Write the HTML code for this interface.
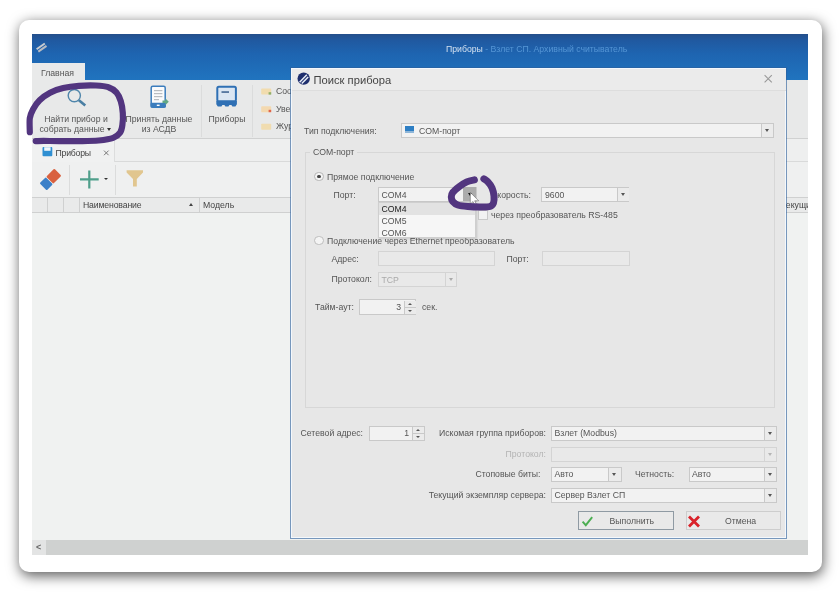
<!DOCTYPE html>
<html lang="ru"><head><meta charset="utf-8"><title>Поиск прибора</title>
<style>
html,body{margin:0;padding:0;background:#fff}
body{width:840px;height:597px;position:relative;overflow:hidden;font-family:"Liberation Sans",sans-serif;font-size:8.7px;color:#555}
#card{position:absolute;left:19px;top:20px;width:803px;height:552px;border-radius:10px;background:#fff;box-shadow:1px 3.5px 13px rgba(0,0,0,.64)}
#shot{position:absolute;left:0;top:0;width:840px;height:597px;clip-path:inset(34px 32px 42px 32px);filter:blur(.7px)}
#shot div,#shot span{position:absolute;box-sizing:border-box;white-space:nowrap}
.t{line-height:12px;height:12px}
.c{text-align:center}
.r{text-align:right}
.inp{background:#f2f2f2;border:1px solid #c9c9c9}
.dis{background:#e9e9e9;border:1px solid #d4d4d4}
.btn{background:#ebebeb;border-left:1px solid #c9c9c9}
.arr{width:0;height:0;border-left:2.5px solid transparent;border-right:2.5px solid transparent;border-top:3px solid #555}
.vsep{width:1px;background:#dbdcdc}
.hl{height:1px;background:#d2d3d3}
#ann{position:absolute;left:0;top:0}
</style></head><body>
<div id="card"></div>
<div id="shot">
<!-- main window -->
<div style="left:32px;top:34px;width:776px;height:521px;background:#f0f2f1"></div>
<div style="left:32px;top:34px;width:776px;height:45.5px;background:linear-gradient(#244f8b 0,#2059a0 14%,#1e64b0 42%,#2074bf 100%)"></div>
<span class="t" style="left:446px;top:43px;color:#d2e0f0">Приборы <span style="position:static;color:#5596d6">- Взлет СП. Архивный считыватель</span></span>
<!-- ribbon -->
<div style="left:32px;top:63px;width:53px;height:18px;background:#e9eaea"></div>
<span class="t" style="left:41px;top:67px;color:#555">Главная</span>
<div style="left:32px;top:80px;width:776px;height:59px;background:#e8e9e9"></div>
<div class="hl" style="left:32px;top:138px;width:776px;background:#d0d1d1"></div>
<span class="t c" style="left:33px;width:86px;top:113px">Найти прибор и</span>
<span class="t c" style="left:29px;width:86px;top:123px">собрать данные</span>
<div class="arr" style="left:107px;top:128px;border-top-color:#333"></div>
<span class="t c" style="left:116px;width:86px;top:113px">Принять данные</span>
<span class="t c" style="left:116px;width:86px;top:123px">из АСДВ</span>
<div class="vsep" style="left:201px;top:85px;height:52px"></div>
<span class="t c" style="left:202px;width:50px;top:113px">Приборы</span>
<div class="vsep" style="left:252px;top:85px;height:52px"></div>
<span class="t" style="left:276px;top:85px">Соо</span>
<span class="t" style="left:276px;top:103px">Уве</span>
<span class="t" style="left:276px;top:120px">Жур</span>
<!-- doc tab strip -->
<div style="left:32px;top:139px;width:776px;height:23px;background:#eeefef"></div>
<div style="left:32px;top:141px;width:83px;height:22px;background:#f0f1f1;border-right:1px solid #dcdddd"></div>
<div class="hl" style="left:115px;top:161px;width:693px;background:#d9dada"></div>
<span class="t" style="left:55.5px;top:146.8px;color:#444;letter-spacing:-.2px">Приборы</span>
<!-- toolbar -->
<div style="left:32px;top:162px;width:776px;height:35px;background:#eff0f0"></div>
<div class="vsep" style="left:69px;top:165px;height:30px"></div>
<div class="vsep" style="left:115px;top:165px;height:30px"></div>
<div class="arr" style="left:104.3px;top:178px;border-width:2.2px 2px 0 2px;border-top-color:#333"></div>
<!-- grid header -->
<div style="left:32px;top:197px;width:776px;height:16px;background:#e9eaea;border-top:1px solid #cfd0d0;border-bottom:1px solid #cfd0d0"></div>
<div class="vsep" style="left:47px;top:198px;height:14px;background:#cfd0d0"></div>
<div class="vsep" style="left:63px;top:198px;height:14px;background:#cfd0d0"></div>
<div class="vsep" style="left:79px;top:198px;height:14px;background:#cfd0d0"></div>
<div class="vsep" style="left:199px;top:198px;height:14px;background:#cfd0d0"></div>
<span class="t" style="left:83px;top:199px;color:#444;letter-spacing:-.15px">Наименование</span>
<span class="t" style="left:203px;top:199px;color:#444">Модель</span>
<span class="t" style="left:781px;top:199px;color:#444">Текущий</span>
<div class="arr" style="left:189px;top:203px;border-top:0;border-bottom:3px solid #444"></div>
<!-- scrollbar -->
<div style="left:32px;top:540px;width:776px;height:15px;background:#cfd1d0"></div>
<div style="left:32px;top:540px;width:14px;height:15px;background:#e3e4e4"></div>
<span class="t" style="left:36px;top:541px;color:#666;font-size:9px;font-weight:bold">&lt;</span>

<!-- dialog -->
<div style="left:290px;top:67px;width:497px;height:472px;background:#e7e7e7;background-clip:padding-box;border:1.6px solid rgba(45,95,155,.62);box-shadow:inset 0 0 0 1px rgba(246,250,255,.85)"></div>
<div style="left:292px;top:69px;width:494px;height:22px;background:#ebebeb;border-bottom:1px solid #dddddd"></div>
<span class="t" style="left:313.5px;top:72.7px;font-size:11.2px;line-height:14px;height:14px;color:#444">Поиск прибора</span>
<span class="t" style="left:304px;top:124.5px">Тип подключения:</span>
<div class="inp" style="left:401px;top:123px;width:373px;height:15px"></div>
<div class="btn" style="left:761px;top:124px;width:12px;height:13px"></div>
<div class="arr" style="left:765px;top:129px"></div>
<div style="left:404.5px;top:126px;width:9px;height:7px;background:#2e7fc4;border-bottom:2px solid #8fb6d8"></div>
<span class="t" style="left:419px;top:124.5px">COM-порт</span>
<!-- group box -->
<div style="left:304.5px;top:152px;width:470px;height:256px;border:1px solid #d7d7d7"></div>
<span class="t" style="left:310px;top:146px;background:#e7e7e7;padding:0 3px">COM-порт</span>
<div style="left:314px;top:171.5px;width:9.5px;height:9.5px;border-radius:50%;border:1px solid #b5b5b5;background:#f4f4f4"></div>
<div style="left:317px;top:174.5px;width:3.5px;height:3.5px;border-radius:50%;background:#444"></div>
<span class="t" style="left:327px;top:170.5px">Прямое подключение</span>
<span class="t" style="left:333.5px;top:189px">Порт:</span>
<div class="inp" style="left:378px;top:187px;width:99px;height:15px"></div>
<span class="t" style="left:381.5px;top:188.5px">COM4</span>
<div style="left:463.4px;top:187px;width:13px;height:14.2px;background:#acacac"></div>
<div class="arr" style="left:467.5px;top:193px;border-top-color:#111"></div>
<span class="t" style="left:491px;top:189px">Скорость:</span>
<div class="inp" style="left:541px;top:187px;width:88.3px;height:15px"></div>
<div class="btn" style="left:617px;top:188px;width:11.5px;height:13px"></div>
<div class="arr" style="left:620.5px;top:193px"></div>
<span class="t" style="left:545px;top:188.5px">9600</span>
<div class="inp" style="left:477.8px;top:209.8px;width:10px;height:10px"></div>
<span class="t" style="left:491px;top:208.5px">через преобразователь RS-485</span>
<div style="left:314px;top:235.5px;width:9.5px;height:9.5px;border-radius:50%;border:1px solid #bdbdbd;background:#f4f4f4"></div>
<span class="t" style="left:327px;top:234.5px">Подключение через Ethernet преобразователь</span>
<!-- dropdown list -->
<div style="left:378px;top:202px;width:98px;height:36px;background:#f6f6f6;border:1px solid #cfcfcf;box-shadow:1px 1px 2px rgba(0,0,0,.15)"></div>
<div style="left:379px;top:203px;width:96px;height:11.5px;background:#e2e2e2"></div>
<span class="t" style="left:381.5px;top:203px;color:#222">COM4</span>
<span class="t" style="left:381.5px;top:215px">COM5</span>
<span class="t" style="left:381.5px;top:227px">COM6</span>
<span class="t" style="left:331.5px;top:252.5px">Адрес:</span>
<div class="dis" style="left:378px;top:251px;width:117px;height:15px"></div>
<span class="t" style="left:506.5px;top:252.5px">Порт:</span>
<div class="dis" style="left:541.5px;top:251px;width:88px;height:15px"></div>
<span class="t" style="left:331.5px;top:273px">Протокол:</span>
<div class="dis" style="left:378px;top:272px;width:79px;height:15px"></div>
<div style="left:444.5px;top:273px;width:1px;height:13px;background:#d4d4d4"></div>
<div class="arr" style="left:448.5px;top:278px;border-top-color:#aaa"></div>
<span class="t" style="left:381.5px;top:273.5px;color:#aaa">TCP</span>
<span class="t" style="left:315px;top:301px">Тайм-аут:</span>
<div class="inp" style="left:359.2px;top:299.2px;width:57.2px;height:15.4px"></div>
<div class="btn" style="left:403.5px;top:300.5px;width:12px;height:13px"></div>
<div style="left:404.5px;top:307px;width:11px;height:1px;background:#c9c9c9"></div>
<div class="arr" style="left:407.5px;top:302.5px;border-width:0 2px 2.5px 2px;border-bottom:2.5px solid #555;border-top:0"></div>
<div class="arr" style="left:407.5px;top:309.5px;border-width:2.5px 2px 0 2px"></div>
<span class="t r" style="left:380px;width:21px;top:301px">3</span>
<span class="t" style="left:422px;top:301px">сек.</span>
<!-- bottom fields -->
<span class="t" style="left:300.5px;top:426.5px">Сетевой адрес:</span>
<div class="inp" style="left:368.5px;top:425.5px;width:56px;height:15px"></div>
<div class="btn" style="left:412px;top:426.5px;width:11.5px;height:13px"></div>
<div style="left:413px;top:433px;width:10.5px;height:1px;background:#c9c9c9"></div>
<div class="arr" style="left:416px;top:428.5px;border-width:0 2px 2.5px 2px;border-bottom:2.5px solid #555;border-top:0"></div>
<div class="arr" style="left:416px;top:435.5px;border-width:2.5px 2px 0 2px"></div>
<span class="t r" style="left:388px;width:21px;top:427px">1</span>
<span class="t r" style="left:400px;width:146px;top:426.5px">Искомая группа приборов:</span>
<div class="inp" style="left:551px;top:425.5px;width:226px;height:15px"></div>
<div class="btn" style="left:763.5px;top:426.5px;width:12.5px;height:13px"></div>
<div class="arr" style="left:767.5px;top:432px"></div>
<span class="t" style="left:554.5px;top:427px">Взлет (Modbus)</span>
<span class="t r" style="left:400px;width:146px;top:447.5px;color:#b4b4b4">Протокол:</span>
<div class="dis" style="left:551px;top:446.5px;width:226px;height:15px"></div>
<div style="left:763.5px;top:447.5px;width:1px;height:13px;background:#d4d4d4"></div>
<div class="arr" style="left:767.5px;top:453px;border-top-color:#b5b5b5"></div>
<span class="t r" style="left:400px;width:140.5px;top:468px">Стоповые биты:</span>
<div class="inp" style="left:551px;top:466.5px;width:70.5px;height:15px"></div>
<div class="btn" style="left:608px;top:467.5px;width:12.5px;height:13px"></div>
<div class="arr" style="left:612px;top:473px"></div>
<span class="t" style="left:554.5px;top:468px">Авто</span>
<span class="t" style="left:635px;top:468px">Четность:</span>
<div class="inp" style="left:688.5px;top:466.5px;width:88.5px;height:15px"></div>
<div class="btn" style="left:763.5px;top:467.5px;width:12.5px;height:13px"></div>
<div class="arr" style="left:767.5px;top:473px"></div>
<span class="t" style="left:692px;top:468px">Авто</span>
<span class="t r" style="left:400px;width:146px;top:488.5px">Текущий экземпляр сервера:</span>
<div class="inp" style="left:551px;top:487.5px;width:226px;height:15px"></div>
<div class="btn" style="left:763.5px;top:488.5px;width:12.5px;height:13px"></div>
<div class="arr" style="left:767.5px;top:494px"></div>
<span class="t" style="left:554.5px;top:489px">Сервер Взлет СП</span>
<!-- buttons -->
<div style="left:578px;top:511px;width:96px;height:19px;background:#e9e9e9;border:1px solid #8f9aa3"></div>
<span class="t" style="left:609.5px;top:515px">Выполнить</span>
<div style="left:685.5px;top:511px;width:95px;height:19px;background:#e9e9e9;border:1px solid #cdcdcd"></div>
<span class="t" style="left:725px;top:515px">Отмена</span>
<svg id="ico" width="840" height="597" viewBox="0 0 840 597" style="position:absolute;left:0;top:0">
<!-- app icon -->
<g transform="translate(41.5,47.5) rotate(-35)"><rect x="-5" y="-2.4" width="10" height="2" fill="#c9ccd0"/><rect x="-5" y="0.6" width="10" height="2" fill="#b9bcc2"/></g>
<!-- magnifier -->
<circle cx="74.3" cy="95.6" r="6.1" fill="none" stroke="#4f86ab" stroke-width="1.4"/>
<line x1="78.9" y1="100.2" x2="85.3" y2="105.6" stroke="#4a7fa3" stroke-width="2.6"/>
<!-- tablet -->
<rect x="151.2" y="86.2" width="14" height="21" rx="1.6" fill="#fafbfc" stroke="#3b7dbd" stroke-width="1.5"/>
<rect x="150.5" y="102.8" width="15.4" height="5" rx="1.2" fill="#3b7dbd"/>
<rect x="156.8" y="104.6" width="2.8" height="1.4" fill="#fff"/>
<rect x="154" y="90" width="8.4" height="1.2" fill="#b9bdc1"/><rect x="154" y="93" width="8.4" height="1.2" fill="#b9bdc1"/><rect x="154" y="96" width="8.4" height="1.2" fill="#b9bdc1"/><rect x="154" y="99" width="5" height="1.2" fill="#b9bdc1"/>
<path d="M162.5 100.5h3v-2l3.3 3.3-3.3 3.3v-2h-3z" fill="#63a883"/>
<!-- devices -->
<rect x="217.3" y="86.8" width="18.6" height="14.5" rx="1.5" fill="#dbe6f2" stroke="#2f70b4" stroke-width="2"/>
<rect x="221.5" y="91.3" width="7.5" height="1.5" fill="#3a5f8d"/>
<path d="M216.3 101h20.6v3.2l-1.5 2.3h-3l-1-1.6h-2l-1 1.6h-3l-1-1.6h-2l-1 1.6h-3.6l-1.5-2.3z" fill="#2f70b4"/>
<!-- small ribbon icons -->
<rect x="261.2" y="88.6" width="10" height="6" rx=".8" fill="#f1dcae"/><rect x="268.6" y="92.2" width="2.6" height="2.4" fill="#8fae6a"/>
<rect x="261.2" y="106.2" width="10" height="6" rx=".8" fill="#f3d9b0"/><rect x="268.6" y="109.8" width="2.6" height="2.4" fill="#e0654a"/>
<rect x="261.2" y="123.8" width="10" height="6" rx=".8" fill="#f0dcb0"/>
<!-- tab icon -->
<rect x="42.5" y="147" width="9.8" height="9.2" rx="1" fill="#2f8fd2"/><rect x="44.2" y="147.2" width="6.4" height="3.6" fill="#eef6fb"/>
<path d="M104 150.6l4.6 4.6M108.6 150.6l-4.6 4.6" stroke="#7a7a7a" stroke-width="1"/>
<!-- eraser -->
<g transform="translate(50.6,179.4) rotate(-45)"><rect x="-10.5" y="-5" width="8.6" height="10" rx="1" fill="#3b80c8"/><rect x="-1.2" y="-5" width="11.4" height="10" rx="1" fill="#d9613f"/></g>
<!-- plus -->
<path d="M89.3 170.6v18M80 179.4h18.7" stroke="#4f9f8b" stroke-width="2.2" fill="none"/>
<!-- funnel -->
<path d="M126.6 170.2h16.4v2.2l-6.2 6.6v7.6l-3.8 0v-7.6l-6.4-6.6z" fill="#e1c68f"/>
<!-- dialog icon -->
<circle cx="303.7" cy="78.6" r="6.2" fill="#1f2f6e"/>
<path d="M299.6 82.2l7.2-7.4M301.8 83.6l6.4-6.6" stroke="#e8eef6" stroke-width="1.5"/>
<!-- dialog close -->
<path d="M764.6 75.2l7.2 7.2M771.8 75.2l-7.2 7.2" stroke="#999" stroke-width="1.1"/>
<!-- check -->
<path d="M582.6 521.6l3.2 3.6 6.4-8" stroke="#4cae52" stroke-width="1.9" fill="none"/>
<!-- red x -->
<path d="M689 516.4l10 10M699 516.4l-10 10" stroke="#d9222a" stroke-width="2.8"/>
<!-- cursor -->
<path d="M470.3 192.4v11.6l2.7-2.5 2.2 4.5 1.7-.8-2.2-4.4h4z" fill="#fff" stroke="#555" stroke-width=".5"/>
</svg>
</div>
<svg id="ann" width="840" height="597" viewBox="0 0 840 597" style="filter:blur(.4px)">
<path d="M29.8 132.2 C29.8 129.9 29.3 122.0 29.8 118.2 C30.4 114.4 31.5 112.3 33.1 109.3 C34.7 106.3 36.8 103.0 39.6 100.3 C42.5 97.5 46.2 94.7 50.1 92.7 C54.0 90.6 58.4 89.2 63.2 88.1 C68.0 87.0 73.5 86.3 78.9 85.9 C84.4 85.4 91.0 85.3 96.0 85.5 C100.9 85.7 105.0 86.0 108.4 87.2 C111.8 88.3 114.2 90.0 116.3 92.3 C118.3 94.6 119.7 97.7 120.8 101.2 C121.9 104.6 122.5 109.0 122.8 113.0 C123.1 116.9 122.9 121.5 122.4 124.8 C122.0 128.0 121.6 130.4 120.1 132.6 C118.5 134.8 116.8 136.6 113.2 137.9 C109.7 139.2 104.3 139.9 98.6 140.5 C92.9 141.0 85.5 141.0 78.9 141.1 C72.4 141.2 65.2 141.2 59.3 141.1 C53.4 141.1 47.5 140.9 43.6 140.9 C39.6 140.9 37.0 141.1 35.7 141.1" fill="none" stroke="#52357f" stroke-width="6.2" stroke-linecap="round" stroke-linejoin="round"/>
<path transform="translate(-.3,.8)" d="M474.7 179.1 C473.4 179.4 469.7 179.9 467.1 181.1 C464.5 182.3 461.4 184.3 459.1 186.1 C456.8 187.9 454.3 190.0 453.1 191.6 C451.8 193.3 451.6 194.6 451.6 196.2 C451.6 197.7 452.0 199.3 453.1 200.7 C454.2 202.0 455.6 203.4 458.1 204.2 C460.6 205.0 464.5 205.4 468.1 205.7 C471.8 206.0 476.5 206.2 480.2 206.2 C483.9 206.2 488.0 206.4 490.3 205.7 C492.5 205.0 493.1 203.9 493.8 202.2 C494.4 200.4 494.5 197.7 494.3 195.2 C494.0 192.6 493.3 189.5 492.3 187.1 C491.3 184.8 489.6 182.6 488.2 181.1 C486.9 179.6 484.9 178.6 484.2 178.1" fill="none" stroke="#52357f" stroke-width="7" stroke-linecap="round" stroke-linejoin="round"/>
</svg>
</body></html>
